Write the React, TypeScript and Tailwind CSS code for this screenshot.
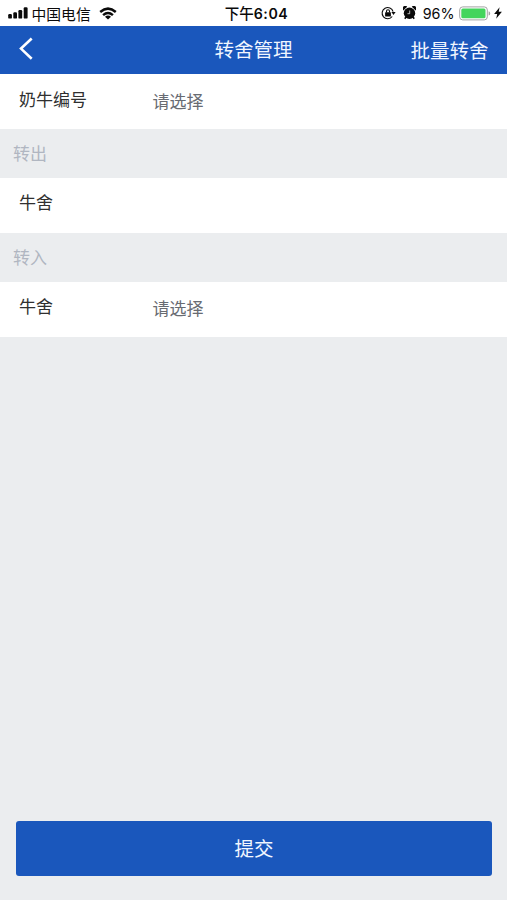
import type { ReactNode } from "react";

function Signal() {
  return (
    <svg className="mb-px ml-2 h-3 w-5 shrink-0" viewBox="0 0 20 12" fill="#0a0a0a">
      <rect x="0.2" y="7" width="3.7" height="4.6" rx="1.2" />
      <rect x="5.3" y="5.3" width="3.7" height="6.3" rx="1.2" />
      <rect x="10.4" y="3" width="3.8" height="8.6" rx="1.2" />
      <rect x="15.7" y="0.2" width="3.9" height="11.4" rx="1.2" />
    </svg>
  );
}

function Wifi() {
  return (
    <svg className="mb-px ml-2 h-[13px] w-[18px] shrink-0" viewBox="0 0 18 13" fill="none" stroke="#0a0a0a" strokeWidth="2.5">
      <path d="M1.2 5 Q9 -1.7 16.8 5" />
      <path d="M4.1 8.1 Q9 3.9 13.9 8.1" />
      <path d="M6 9.7 Q9 7.3 12 9.7 L9 12.6 Z" fill="#0a0a0a" stroke="none" />
    </svg>
  );
}

function RotationLock() {
  return (
    <svg className="mb-px h-[14px] w-[15px] shrink-0" viewBox="0 0 15 14" fill="none" stroke="#0a0a0a" strokeWidth="1.1">
      <path d="M11.2 10.5 A5.6 5.6 0 1 1 12.1 5.6" />
      <path d="M10.4 6 H14.6 L12.5 9 Z" fill="#0a0a0a" stroke="none" />
      <rect x="4.1" y="6.2" width="5.8" height="4.2" rx="0.5" fill="#0a0a0a" stroke="none" />
      <path d="M5.5 6.4 V5.2 A1.5 1.5 0 0 1 8.5 5.2 V6.4" />
    </svg>
  );
}

function Alarm() {
  return (
    <svg className="mb-px ml-[7px] h-[14px] w-[13px] shrink-0" viewBox="0 0 13 14">
      <circle cx="6.5" cy="7.3" r="5.7" fill="#0a0a0a" />
      <path d="M0.2 4.4 A2.6 2.6 0 0 1 4.2 0.8 Z M12.8 4.4 A2.6 2.6 0 0 0 8.8 0.8 Z" fill="#0a0a0a" />
      <path d="M3 11 L1.8 12.8 M10 11 L11.2 12.8" stroke="#0a0a0a" strokeWidth="1.6" />
      <path d="M6.7 4.5 V7.7 H4.5" fill="none" stroke="#fff" strokeWidth="0.7" />
    </svg>
  );
}

function Battery() {
  return (
    <svg className="mb-px ml-1 h-[15px] w-[32px] shrink-0" viewBox="0 0 32 15">
      <rect x="0.7" y="0.9" width="27.6" height="13" rx="3" fill="#fff" stroke="#a3a3a3" />
      <rect x="2.3" y="2.5" width="24.2" height="9.8" rx="1.5" fill="#43d55c" />
      <path d="M29.6 5.2 Q31.2 5.6 31.2 7.4 Q31.2 9.2 29.6 9.6 Z" fill="#a3a3a3" />
    </svg>
  );
}

function Bolt() {
  return (
    <svg className="mb-px ml-[3px] h-3 w-2 shrink-0" viewBox="0 0 8 12" fill="#0a0a0a">
      <path d="M5.6 0.2 L0.1 6.9 H3.2 L2.2 11.8 L7.9 4.7 H4.7 Z" />
    </svg>
  );
}

function FieldRow({ label, value, className }: { label: string; value?: string; className: string }) {
  return (
    <div className={"flex bg-white pl-[19px] text-[17px] leading-6 " + className}>
      <span className="w-[133.5px] text-[#303030]">{label}</span>
      {value && <span className="pt-[2px] text-[#686b72]">{value}</span>}
    </div>
  );
}

function Section({ children }: { children: ReactNode }) {
  return <div className="h-[49px] pl-[13px] pt-3 text-[17px] leading-6 text-[#b0b6c1]">{children}</div>;
}

export default function App() {
  return (
    <div className="flex h-[900px] w-full flex-col overflow-hidden bg-[#ebedef] font-['Noto_Sans_CJK_SC',sans-serif]">
      <div className="grid h-[25.5px] shrink-0 grid-cols-[1fr_auto_1fr] items-center bg-white pt-[1.5px] text-[#0a0a0a]">
        <div className="flex items-center">
          <Signal />
          <span className="ml-[3.5px] text-[14.8px] leading-5">中国电信</span>
          <Wifi />
        </div>
        <div className="pl-[6px] text-[14.5px] font-medium leading-5">
          下午<span className="font-['Inter',sans-serif] text-[14.2px] font-semibold tracking-[0.5px]">6:04</span>
        </div>
        <div className="flex items-center justify-end pr-[5.5px]">
          <RotationLock />
          <Alarm />
          <span className="ml-[7px] font-['Inter',sans-serif] text-[14.3px] leading-5">96%</span>
          <Battery />
          <Bolt />
        </div>
      </div>
      <header className="grid h-[48.5px] shrink-0 grid-cols-[1fr_auto_1fr] items-center bg-[#1a57bc] text-[19.5px] leading-6 text-[#f1f6ff]">
        <svg className="mb-[3px] ml-[19px] h-[23px] w-[15px]" viewBox="0 0 15 23" fill="none" stroke="#fff" strokeWidth="2.6">
          <path d="M12.7 1.5 L2 11.6 L12.7 21.7" />
        </svg>
        <h1 className="pb-[2px]">转舍管理</h1>
        <button className="justify-self-end pr-[18.5px]">批量转舍</button>
      </header>
      <FieldRow className="h-[54.5px] pt-[12.5px]" label="奶牛编号" value="请选择" />
      <Section>转出</Section>
      <FieldRow className="h-[55.5px] pt-3" label="牛舍" />
      <Section>转入</Section>
      <FieldRow className="h-[55px] pt-3" label="牛舍" value="请选择" />
      <button className="mb-[24.5px] ml-4 mr-[15px] mt-auto h-[55px] shrink-0 rounded-[3px] bg-[#1a57bc] text-[19.5px] leading-6 text-[#f1f6ff]">
        提交
      </button>
    </div>
  );
}
